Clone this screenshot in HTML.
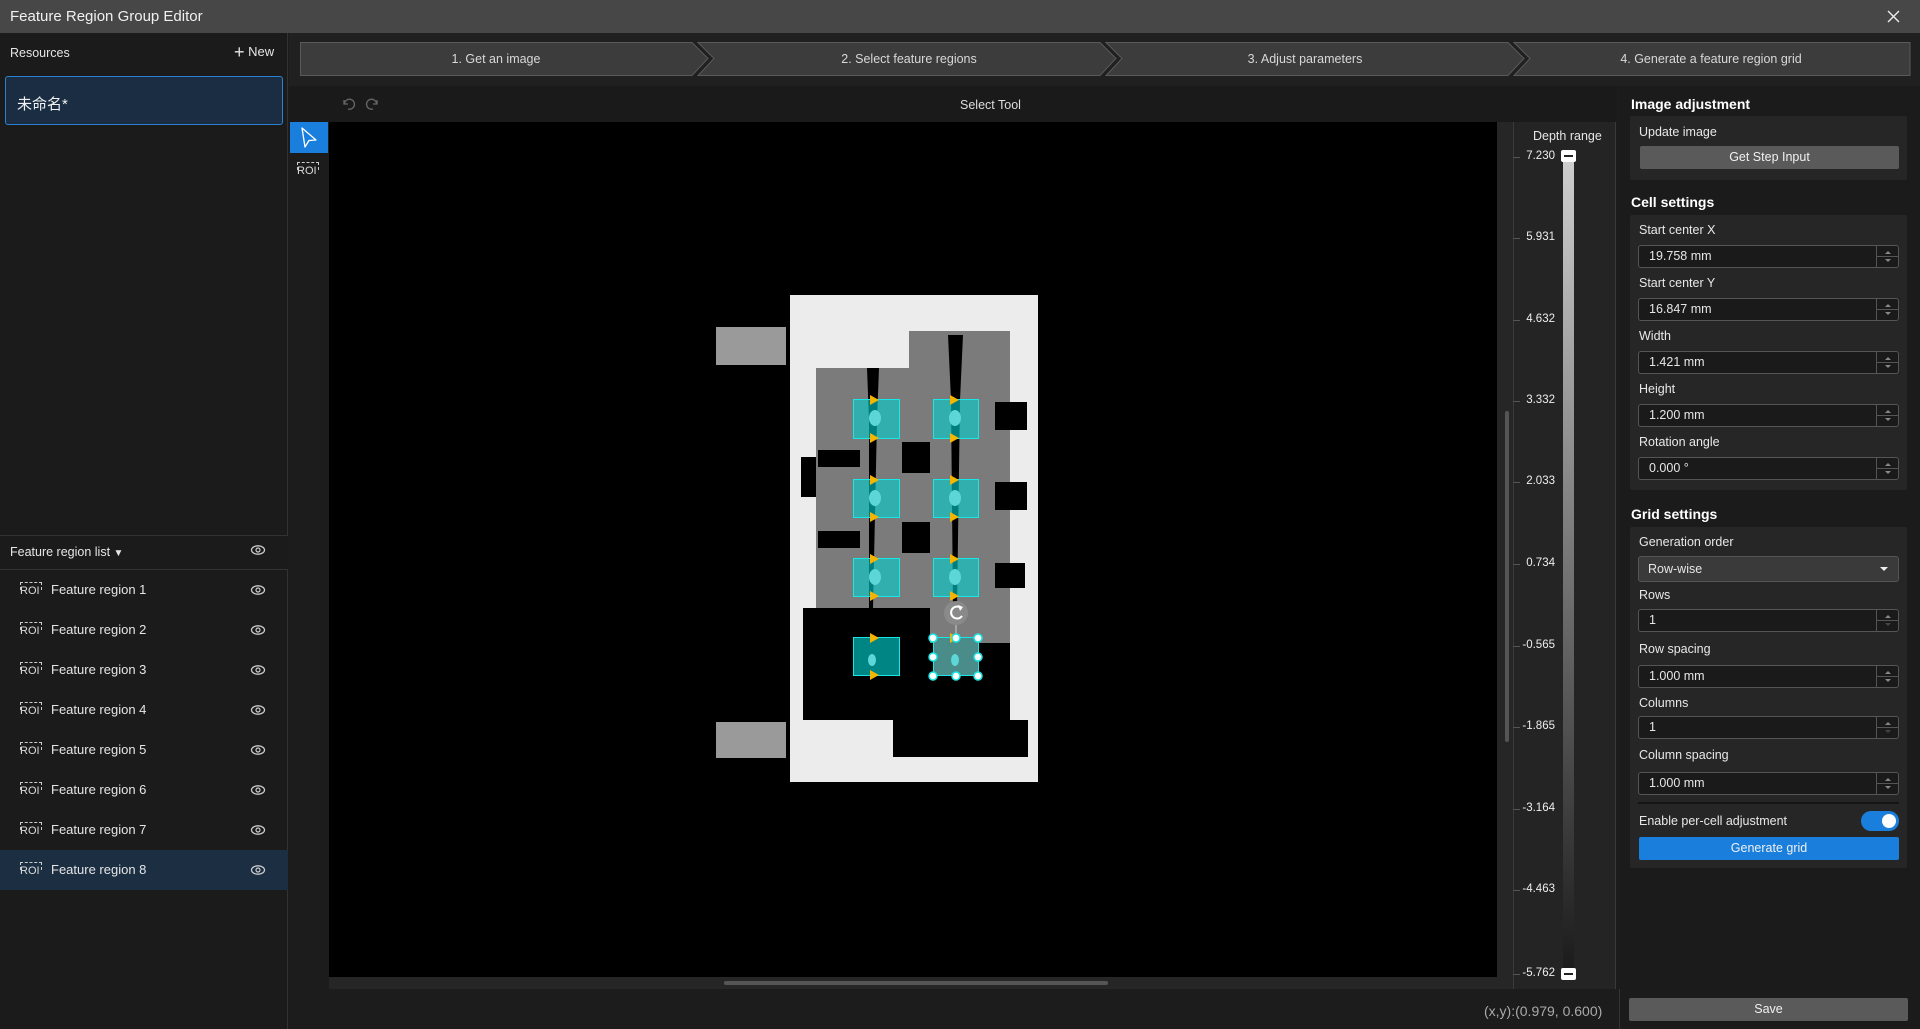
<!DOCTYPE html>
<html><head><meta charset="utf-8">
<style>
*{box-sizing:border-box;margin:0;padding:0}
body{width:1920px;height:1029px;background:#1c1c1c;font-family:"Liberation Sans","Noto Sans CJK SC",sans-serif;color:#e6e6e6;font-size:13px;position:relative;overflow:hidden}
.a{position:absolute}
.title{left:0;top:0;width:1920px;height:33px;background:#474747;font-size:15px;line-height:33px;padding-left:10px;color:#f0f0f0}
.lp{left:0;top:33px;width:288px;height:996px;background:#1b1b1b;border-right:1px solid #333}
.row{left:0;width:288px;height:40px;line-height:40px}
.row .t{position:absolute;left:51px;font-size:13px}
.roi{position:absolute;left:20px;top:12px;width:22px;height:16px;font-size:11px;color:#ddd;line-height:18px}
.roi:before{content:"";position:absolute;left:0;top:0;width:20px;height:7px;border-top:1px dashed #ccc;border-left:1px dashed #ccc;border-right:1px dashed #ccc}
.eye{position:absolute;left:250px;top:14px}
.rp{left:1619px;top:86px;width:301px;height:943px;background:#1b1b1b}
.h{font-weight:bold;font-size:14px;color:#fff}
.box{left:1630px;width:277px;background:#262626;border-radius:2px}
.lbl{font-size:12.5px;color:#e8e8e8}
.inp{left:1638px;width:261px;height:23px;background:#1a1a1a;border:1px solid #555;border-radius:3px;font-size:12.5px;line-height:21px;padding-left:10px}
.inp:after{content:"";position:absolute;right:21px;top:0;width:1px;height:21px;background:#555}
.inp i{position:absolute;right:7px;width:0;height:0;border-left:3px solid transparent;border-right:3px solid transparent}
.inp .u{top:5px;border-bottom:3px solid #888}
.inp .d{top:13px;border-top:3px solid #888}
.inp b{position:absolute;right:0;top:10px;width:21px;height:1px;background:#555}
.btn{background:#5a5a5a;border-radius:2px;text-align:center;font-size:12.5px;color:#f0f0f0}
.dl{font-size:11.5px;color:#eee;text-align:right;width:60px;left:1495px}
.tk{left:1513px;width:7px;height:1px;background:#555}
</style></head><body>
<div class="a title">Feature Region Group Editor</div>
<svg class="a" style="left:1887px;top:10px" width="13" height="13"><path d="M1,1 L12,12 M12,1 L1,12" stroke="#eee" stroke-width="1.4"/></svg>

<!-- left panel -->
<div class="a lp"></div>
<div class="a" style="left:10px;top:46px;font-size:12.5px">Resources</div>
<div class="a" style="left:234px;top:42px;font-size:13px"><span style="font-size:18px;vertical-align:-2px">+</span> New</div>
<div class="a" style="left:5px;top:76px;width:278px;height:49px;background:#1a2d42;border:1px solid #2f7fd0;border-radius:3px"></div>
<div class="a" style="left:17px;top:93px;font-size:15px;color:#f2f2f2">未命名*</div>
<div class="a" style="left:0;top:535px;width:288px;height:35px;border-top:1px solid #333;border-bottom:1px solid #333;background:#1b1b1b"></div>
<div class="a" style="left:10px;top:545px;font-size:12.5px">Feature region list <span style="font-size:10px">▼</span></div>
<svg class="a" style="left:250px;top:544px" width="16" height="12"><ellipse cx="8" cy="6" rx="6.5" ry="4.2" fill="none" stroke="#ccc" stroke-width="1.3"/><circle cx="8" cy="6" r="2" fill="none" stroke="#ccc" stroke-width="1.2"/></svg>
<div class="a" style="left:0;top:850px;width:288px;height:40px;background:#1b2e42"></div>
<div class="a row" style="top:570px"><span class="roi">ROI</span><span class="t">Feature region 1</span><svg class="eye" width="16" height="12"><ellipse cx="8" cy="6" rx="6.5" ry="4.2" fill="none" stroke="#ccc" stroke-width="1.3"/><circle cx="8" cy="6" r="2" fill="none" stroke="#ccc" stroke-width="1.2"/></svg></div>
<div class="a row" style="top:610px"><span class="roi">ROI</span><span class="t">Feature region 2</span><svg class="eye" width="16" height="12"><ellipse cx="8" cy="6" rx="6.5" ry="4.2" fill="none" stroke="#ccc" stroke-width="1.3"/><circle cx="8" cy="6" r="2" fill="none" stroke="#ccc" stroke-width="1.2"/></svg></div>
<div class="a row" style="top:650px"><span class="roi">ROI</span><span class="t">Feature region 3</span><svg class="eye" width="16" height="12"><ellipse cx="8" cy="6" rx="6.5" ry="4.2" fill="none" stroke="#ccc" stroke-width="1.3"/><circle cx="8" cy="6" r="2" fill="none" stroke="#ccc" stroke-width="1.2"/></svg></div>
<div class="a row" style="top:690px"><span class="roi">ROI</span><span class="t">Feature region 4</span><svg class="eye" width="16" height="12"><ellipse cx="8" cy="6" rx="6.5" ry="4.2" fill="none" stroke="#ccc" stroke-width="1.3"/><circle cx="8" cy="6" r="2" fill="none" stroke="#ccc" stroke-width="1.2"/></svg></div>
<div class="a row" style="top:730px"><span class="roi">ROI</span><span class="t">Feature region 5</span><svg class="eye" width="16" height="12"><ellipse cx="8" cy="6" rx="6.5" ry="4.2" fill="none" stroke="#ccc" stroke-width="1.3"/><circle cx="8" cy="6" r="2" fill="none" stroke="#ccc" stroke-width="1.2"/></svg></div>
<div class="a row" style="top:770px"><span class="roi">ROI</span><span class="t">Feature region 6</span><svg class="eye" width="16" height="12"><ellipse cx="8" cy="6" rx="6.5" ry="4.2" fill="none" stroke="#ccc" stroke-width="1.3"/><circle cx="8" cy="6" r="2" fill="none" stroke="#ccc" stroke-width="1.2"/></svg></div>
<div class="a row" style="top:810px"><span class="roi">ROI</span><span class="t">Feature region 7</span><svg class="eye" width="16" height="12"><ellipse cx="8" cy="6" rx="6.5" ry="4.2" fill="none" stroke="#ccc" stroke-width="1.3"/><circle cx="8" cy="6" r="2" fill="none" stroke="#ccc" stroke-width="1.2"/></svg></div>
<div class="a row" style="top:850px"><span class="roi">ROI</span><span class="t">Feature region 8</span><svg class="eye" width="16" height="12"><ellipse cx="8" cy="6" rx="6.5" ry="4.2" fill="none" stroke="#ccc" stroke-width="1.3"/><circle cx="8" cy="6" r="2" fill="none" stroke="#ccc" stroke-width="1.2"/></svg></div>

<!-- main top -->
<div class="a" style="left:289px;top:33px;width:1631px;height:53px;background:#202020"></div>
<svg class="a" style="left:300px;top:42px" width="1611" height="34">
<g fill="#3c3c3c" stroke="#5a5a5a" stroke-width="1">
<polygon points="0.5,0.5 392,0.5 408,16.5 392,33.5 0.5,33.5"/>
<polygon points="398,0.5 800,0.5 816,16.5 800,33.5 398,33.5 414,16.5"/>
<polygon points="806,0.5 1208,0.5 1224,16.5 1208,33.5 806,33.5 822,16.5"/>
<polygon points="1214,0.5 1610,0.5 1610,33.5 1214,33.5 1230,16.5"/>
</g>
<g fill="#d8d8d8" font-family="Liberation Sans" font-size="12.5" text-anchor="middle">
<text x="196" y="21">1. Get an image</text>
<text x="609" y="21">2. Select feature regions</text>
<text x="1005" y="21">3. Adjust parameters</text>
<text x="1411" y="21">4. Generate a feature region grid</text>
</g></svg>
<div class="a" style="left:289px;top:86px;width:1328px;height:36px;background:#1a1a1a"></div>
<svg class="a" style="left:340px;top:96px" width="44" height="16"><g fill="none" stroke="#666" stroke-width="1.3"><path d="M4,4 L4,8 L8,8 M4.5,7.5 A5,5 0 1,1 8,13"/><path d="M37,4 L37,8 L33,8 M36.5,7.5 A5,5 0 1,0 33,13"/></g></svg>
<div class="a" style="left:960px;top:98px;font-size:12.5px;color:#ddd">Select Tool</div>

<!-- tool column -->
<div class="a" style="left:289px;top:122px;width:40px;height:867px;background:#1c1c1c"></div>
<div class="a" style="left:290px;top:122px;width:38px;height:31px;background:#1a7fdc"></div>
<svg class="a" style="left:299px;top:126px" width="20" height="24"><path d="M3,2 L17,14 L10,14.5 L6,21 Z" fill="none" stroke="#fff" stroke-width="1.3" stroke-linejoin="round"/></svg>
<div class="a" style="left:297px;top:162px;width:24px;height:24px"><span class="roi" style="left:0;top:0">ROI</span></div>

<!-- canvas -->
<div class="a" style="left:329px;top:122px;width:1168px;height:855px;background:#000"></div>
<div class="a" style="left:329px;top:977px;width:1168px;height:12px;background:#262626"></div>
<div class="a" style="left:724px;top:981px;width:384px;height:4px;background:#555;border-radius:2px"></div>
<div class="a" style="left:1497px;top:122px;width:16px;height:867px;background:#262626"></div>
<div class="a" style="left:1505px;top:411px;width:4px;height:331px;background:#555;border-radius:2px"></div>

<svg class="a" style="left:700px;top:280px" width="380" height="520">
<g transform="translate(-700,-280)">
<rect x="716" y="327" width="70" height="38" fill="#9a9a9a"/>
<rect x="716" y="722" width="70" height="36" fill="#9a9a9a"/>
<rect x="790" y="295" width="248" height="487" fill="#ececec"/>
<path d="M816,368 L909,368 L909,331 L1010,331 L1010,608 L1010,643 L930,643 L930,608 L816,608 Z" fill="#7b7b7b"/>
<path d="M803,608 L930,608 L930,643 L1010,643 L1010,720 L1028,720 L1028,757 L893,757 L893,720 L803,720 Z" fill="#000"/>
<path d="M867,368 L879,368 L877,420 L873,608 L869,608 L869,420 Z" fill="#000"/>
<path d="M948,335 L963,335 L960,400 L957,608 L953,608 L951,400 Z" fill="#000"/>
<rect x="995" y="402" width="32" height="28" fill="#000"/>
<rect x="995" y="482" width="32" height="28" fill="#000"/>
<rect x="995" y="563" width="30" height="25" fill="#000"/>
<rect x="902" y="442" width="28" height="31" fill="#000"/>
<rect x="902" y="522" width="28" height="31" fill="#000"/>
<rect x="818" y="450" width="42" height="17" fill="#000"/>
<rect x="818" y="531" width="42" height="17" fill="#000"/>
<rect x="801" y="457" width="15" height="40" fill="#000"/>
<g fill="rgba(0,210,210,0.6)" stroke="#19e6e6" stroke-width="1">
<rect x="853.5" y="399.5" width="46" height="39"/><rect x="933.5" y="399.5" width="45" height="39"/>
<rect x="853.5" y="479.5" width="46" height="38"/><rect x="933.5" y="479.5" width="45" height="38"/>
<rect x="853.5" y="558.5" width="46" height="38"/><rect x="933.5" y="558.5" width="45" height="38"/>
</g>
<rect x="853.5" y="637.5" width="46" height="38" fill="#008585" stroke="#19e6e6"/>
<rect x="933.5" y="637.5" width="45" height="38" fill="#4a8c8a" stroke="#19e6e6"/>
<g fill="#5cd6d6">
<ellipse cx="875" cy="418" rx="6" ry="8"/><ellipse cx="955" cy="418" rx="6" ry="8"/>
<ellipse cx="875" cy="498" rx="6" ry="8"/><ellipse cx="955" cy="498" rx="6" ry="8"/>
<ellipse cx="875" cy="577" rx="6" ry="8"/><ellipse cx="955" cy="577" rx="6" ry="8"/>
<ellipse cx="872" cy="660" rx="4" ry="6"/><ellipse cx="955" cy="660" rx="4" ry="6"/>
</g>
<g fill="#f5b400">
<path d="M870,395 L879,400 L870,405Z"/><path d="M870,433 L879,438 L870,443Z"/>
<path d="M950,395 L959,400 L950,405Z"/><path d="M950,433 L959,438 L950,443Z"/>
<path d="M870,475 L879,480 L870,485Z"/><path d="M870,512 L879,517 L870,522Z"/>
<path d="M950,475 L959,480 L950,485Z"/><path d="M950,512 L959,517 L950,522Z"/>
<path d="M870,554 L879,559 L870,564Z"/><path d="M870,591 L879,596 L870,601Z"/>
<path d="M950,554 L959,559 L950,564Z"/><path d="M950,591 L959,596 L950,601Z"/>
<path d="M870,633 L879,638 L870,643Z"/><path d="M870,670 L879,675 L870,680Z"/>
<path d="M950,633 L959,638 L950,643Z"/>
</g>
<line x1="956" y1="625" x2="956" y2="638" stroke="#ccc"/>
<circle cx="956" cy="613" r="12" fill="#8a8a8a"/>
<path d="M961,608 A6,6 0 1,0 962,616" fill="none" stroke="#fff" stroke-width="2"/>
<path d="M958,605 L963,607 L960,611Z" fill="#fff"/>
<g fill="#fff" stroke="#19e6e6" stroke-width="1.5">
<circle cx="933" cy="638" r="4"/><circle cx="956" cy="638" r="4"/><circle cx="978" cy="638" r="4"/>
<circle cx="933" cy="657" r="4"/><circle cx="978" cy="657" r="4"/>
<circle cx="933" cy="676" r="4"/><circle cx="956" cy="676" r="4"/><circle cx="978" cy="676" r="4"/>
</g>
</g></svg>

<!-- depth range -->
<div class="a" style="left:1513px;top:122px;width:103px;height:867px;background:#242424;border-left:1px solid #3a3a3a;border-right:1px solid #3a3a3a"></div>
<div class="a" style="left:1533px;top:129px;font-size:12.5px">Depth range</div>
<div class="a" style="left:1563px;top:152px;width:11px;height:825px;background:linear-gradient(#d0d0d0,#1a1a1a)"></div>
<div class="a" style="left:1561px;top:150px;width:15px;height:12px;background:#fff;border-radius:2px"><div style="margin:5px 3px;height:2px;background:#222"></div></div>
<div class="a" style="left:1561px;top:968px;width:15px;height:12px;background:#fff;border-radius:2px"><div style="margin:5px 3px;height:2px;background:#222"></div></div>
<div class="a tk" style="top:157px"></div><div class="a dl" style="top:150px">7.230</div>
<div class="a tk" style="top:238px"></div><div class="a dl" style="top:231px">5.931</div>
<div class="a tk" style="top:320px"></div><div class="a dl" style="top:313px">4.632</div>
<div class="a tk" style="top:401px"></div><div class="a dl" style="top:394px">3.332</div>
<div class="a tk" style="top:482px"></div><div class="a dl" style="top:475px">2.033</div>
<div class="a tk" style="top:564px"></div><div class="a dl" style="top:557px">0.734</div>
<div class="a tk" style="top:646px"></div><div class="a dl" style="top:639px">-0.565</div>
<div class="a tk" style="top:727px"></div><div class="a dl" style="top:720px">-1.865</div>
<div class="a tk" style="top:809px"></div><div class="a dl" style="top:802px">-3.164</div>
<div class="a tk" style="top:890px"></div><div class="a dl" style="top:883px">-4.463</div>
<div class="a tk" style="top:974px"></div><div class="a dl" style="top:967px">-5.762</div>
<div class="a" style="left:1484px;top:1003px;font-size:14px;color:#aaa">(x,y):(0.979, 0.600)</div>

<!-- right panel -->
<div class="a rp"></div>
<div class="a h" style="left:1631px;top:96px">Image adjustment</div>
<div class="a box" style="top:116px;height:64px"></div>
<div class="a lbl" style="left:1639px;top:125px">Update image</div>
<div class="a btn" style="left:1640px;top:146px;width:259px;height:23px;line-height:23px">Get Step Input</div>

<div class="a h" style="left:1631px;top:194px">Cell settings</div>
<div class="a box" style="top:215px;height:275px"></div>
<div class="a lbl" style="left:1639px;top:223px">Start center X</div>
<div class="a inp" style="top:245px">19.758 mm<i class="u"></i><b></b><i class="d"></i></div>
<div class="a lbl" style="left:1639px;top:276px">Start center Y</div>
<div class="a inp" style="top:298px">16.847 mm<i class="u"></i><b></b><i class="d"></i></div>
<div class="a lbl" style="left:1639px;top:329px">Width</div>
<div class="a inp" style="top:351px">1.421 mm<i class="u"></i><b></b><i class="d"></i></div>
<div class="a lbl" style="left:1639px;top:382px">Height</div>
<div class="a inp" style="top:404px">1.200 mm<i class="u"></i><b></b><i class="d"></i></div>
<div class="a lbl" style="left:1639px;top:435px">Rotation angle</div>
<div class="a inp" style="top:457px">0.000 °<i class="u"></i><b></b><i class="d"></i></div>

<div class="a h" style="left:1631px;top:506px">Grid settings</div>
<div class="a box" style="top:527px;height:341px"></div>
<div class="a lbl" style="left:1639px;top:535px">Generation order</div>
<div class="a" style="left:1638px;top:556px;width:261px;height:26px;background:#3a3a3a;border:1px solid #555;border-radius:3px;font-size:12.5px;line-height:24px;padding-left:9px">Row-wise<span style="position:absolute;right:10px;top:10px;border-left:4px solid transparent;border-right:4px solid transparent;border-top:4px solid #eee"></span></div>
<div class="a lbl" style="left:1639px;top:588px">Rows</div>
<div class="a inp" style="top:609px">1<i class="u"></i><b></b><i class="d" style="border-top-color:#444"></i></div>
<div class="a lbl" style="left:1639px;top:642px">Row spacing</div>
<div class="a inp" style="top:665px">1.000 mm<i class="u"></i><b></b><i class="d"></i></div>
<div class="a lbl" style="left:1639px;top:696px">Columns</div>
<div class="a inp" style="top:716px">1<i class="u"></i><b></b><i class="d" style="border-top-color:#444"></i></div>
<div class="a lbl" style="left:1639px;top:748px">Column spacing</div>
<div class="a inp" style="top:772px">1.000 mm<i class="u"></i><b></b><i class="d"></i></div>
<div class="a" style="left:1638px;top:802px;width:261px;height:2px;background:#151515"></div>
<div class="a lbl" style="left:1639px;top:814px">Enable per-cell adjustment</div>
<div class="a" style="left:1861px;top:811px;width:38px;height:20px;background:#1a7fdc;border-radius:10px"><div style="position:absolute;right:3px;top:3px;width:14px;height:14px;border-radius:7px;background:#fff"></div></div>
<div class="a btn" style="left:1639px;top:837px;width:260px;height:23px;line-height:23px;background:#1a7fdc">Generate grid</div>

<div class="a" style="left:1619px;top:989px;width:1px;height:40px;background:#333"></div>
<div class="a btn" style="left:1629px;top:998px;width:279px;height:23px;line-height:23px">Save</div>
</body></html>
